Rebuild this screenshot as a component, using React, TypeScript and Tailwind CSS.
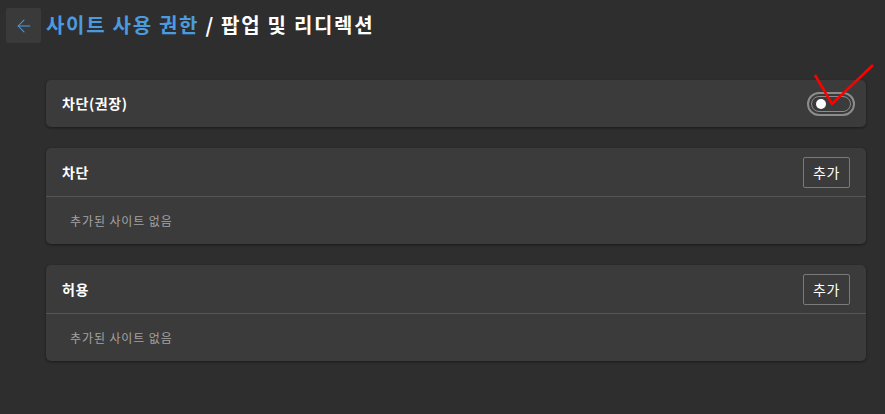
import { ArrowLeft } from "lucide-react";

const FONT = { fontFamily: '"Noto Sans CJK KR", "Noto Sans", sans-serif' };

function SiteListCard({ title }: { title: string }) {
  return (
    <section className="rounded-[5px] bg-[#3b3b3b] shadow-[0_1px_3px_rgba(0,0,0,0.45)]">
      <div className="flex h-[48px] items-center justify-between pl-4 pr-4">
        <h2 className="text-[14px] font-bold tracking-[0.5px] text-white">{title}</h2>
        <button className="h-[31px] w-[47px] rounded-[2px] border border-[#7a7a7a] text-[14px] tracking-[0.5px] text-white">
          추가
        </button>
      </div>
      <div className="border-t border-[#555555]" />
      <div className="flex h-[47px] items-center pl-6 text-[12px] tracking-[0.9px] text-[#a3a3a3]">
        추가된 사이트 없음
      </div>
    </section>
  );
}

export default function App() {
  return (
    <div className="relative h-[414px] w-[885px] bg-[#2e2e2e]" style={FONT}>
      <header className="flex items-center gap-[5px] pl-[6px] pt-[8px]">
        <button className="flex h-[35px] w-[35px] items-center justify-center rounded-[2px] bg-[#3a3a3a] text-[#4a9be0]">
          <ArrowLeft size={20} strokeWidth={1.25} />
        </button>
        <h1 className="-mt-[1px] text-[20px] font-bold leading-none tracking-[1.7px]">
          <span className="text-[#4a9be0]">사이트 사용 권한</span>
          <span className="text-white"> / 팝업 및 리디렉션</span>
        </h1>
      </header>

      <main className="flex flex-col gap-[21px] pl-[46px] pr-[19px] pt-[37px]">
        <section className="flex h-[47px] items-center justify-between rounded-[5px] bg-[#3b3b3b] pl-4 pr-[11px] shadow-[0_1px_3px_rgba(0,0,0,0.45)]">
          <h2 className="text-[14px] font-bold tracking-[0.6px] text-white">차단(권장)</h2>
          <div className="flex h-[24px] w-[48px] items-center rounded-full border-2 border-[#8c8c8c] p-[2px]">
            <div className="flex h-full w-full items-center rounded-full border border-[#8c8c8c] pl-[4px]">
              <div className="h-[10px] w-[10px] rounded-full bg-white" />
            </div>
          </div>
        </section>

        <SiteListCard title="차단" />
        <SiteListCard title="허용" />
      </main>

      <svg className="pointer-events-none absolute left-0 top-0" width="885" height="414">
        <polyline points="815,75 832,104 873,65" fill="none" stroke="#ff0000" strokeWidth="2.5" />
      </svg>
    </div>
  );
}
